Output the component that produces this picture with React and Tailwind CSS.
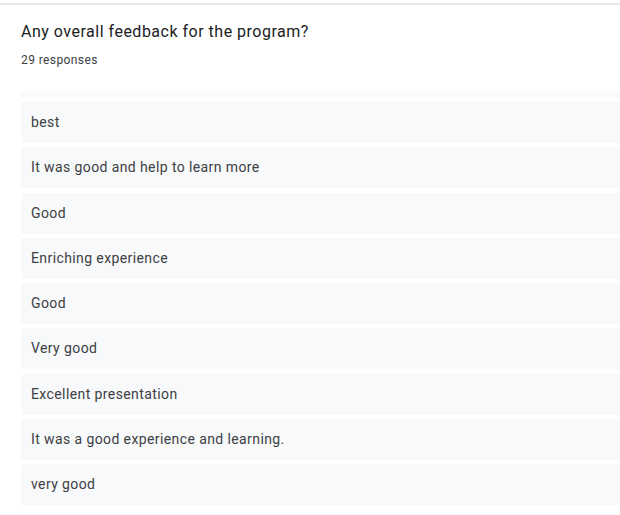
import React from "react";

const responses = [
    "best",
    "It was good and help to learn more",
    "Good",
    "Enriching experience",
    "Good",
    "Very good",
    "Excellent presentation",
    "It was a good experience and learning.",
    "very good",
];

const App = () => {
    return (
        <div
            className="w-[620px] h-[515px] overflow-hidden bg-white pt-[3px]"
            style={{ fontFamily: "Roboto, 'Liberation Sans', sans-serif" }}
        >
            <div className="border-t-2 border-[#e8e8e8] pl-[21px]">
                {/* Question header */}
                <div className="pt-[15px] text-[16px] leading-[24px] tracking-[0.5px] text-[#202124]">
                    Any overall feedback for the program?
                </div>
                <div className="mt-[8px] text-[12px] leading-[16px] tracking-[0.4px] text-[#3c4043]">
                    29 responses
                </div>

                {/* Scrolled list */}
                <div className="mt-[23px] flex flex-col">
                    <div className="h-[6px] bg-gradient-to-b from-[#fdfdfd] to-[#f7f8f9]" />
                    <div className="mt-[5px] flex flex-col gap-[4.25px]">
                        {responses.map((text, i) => (
                            <div
                                key={i}
                                className="h-[41px] flex items-center rounded-l-[4px] bg-[#f8f9fa] pl-[10px] text-[14px] tracking-[0.4px] text-[#3c4043]"
                            >
                                {text}
                            </div>
                        ))}
                    </div>
                </div>
            </div>
        </div>
    );
};

export default App;
